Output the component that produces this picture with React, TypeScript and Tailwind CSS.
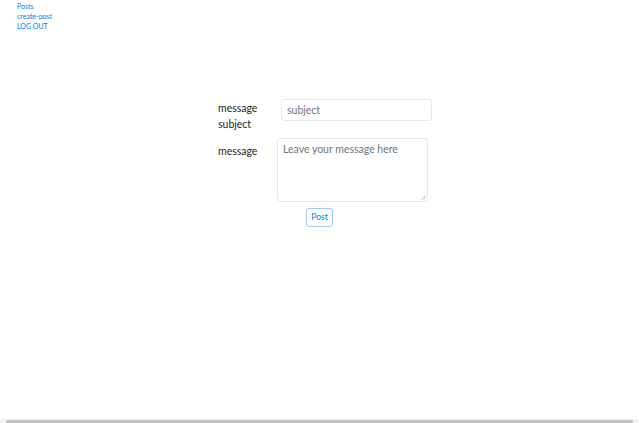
import React from "react";

export default function App() {
  return (
    <div className="relative min-h-[423px] bg-white font-['Lato','Segoe_UI',sans-serif] text-[#212529]">
      <nav className="flex flex-col pl-[17px] pt-px text-[7px] leading-[10px] text-[#007bff]">
        <a href="#">Posts</a>
        <a href="#">create-post</a>
        <a href="#">LOG OUT</a>
      </nav>

      <form className="ml-[218px] mt-[68px] flex w-[214px] flex-col">
        <div className="flex items-start">
          <label className="w-[63px] pt-[1px] text-[10.5px] leading-[16px]">
            message subject
          </label>
          <input
            className="h-[22px] w-[151px] rounded-[3px] border border-[#e6e8ea] px-[5px] text-[10.5px] outline-none placeholder:text-[#6c757d]"
            placeholder="subject"
          />
        </div>
        <div className="mt-[6px] flex items-start">
          <label className="w-[59px] pt-[5px] text-[10.5px] leading-[16px]">message</label>
          <div className="relative">
            <textarea
              className="block h-[64px] w-[151px] resize-none rounded-[3px] border border-[#e6e8ea] px-[5px] py-[2px] text-[10.5px] leading-[16px] outline-none placeholder:text-[#6c757d]"
              placeholder="Leave your message here"
            />
            <svg
              className="pointer-events-none absolute bottom-[2px] right-[2px]"
              width="5"
              height="5"
              viewBox="0 0 5 5"
            >
              <path d="M4.5 0.5 L0.5 4.5 M4.5 2.5 L2.5 4.5" stroke="#a8a8a8" strokeWidth="0.8" />
            </svg>
          </div>
        </div>
        <div className="mt-[6px] ml-[88px] flex">
          <button
            type="button"
            className="block h-[19px] w-[27px] rounded-[3px] border border-[#9cc8ff] text-[8.5px] leading-none text-[#007bff]"
          >
            Post
          </button>
        </div>
      </form>

      <div className="fixed bottom-0 left-0 flex h-[4px] w-full items-center bg-[#f1f1f1] px-[6px]">
        <div className="h-[3px] flex-1 rounded-full bg-[#c1c1c1]" />
      </div>
    </div>
  );
}
